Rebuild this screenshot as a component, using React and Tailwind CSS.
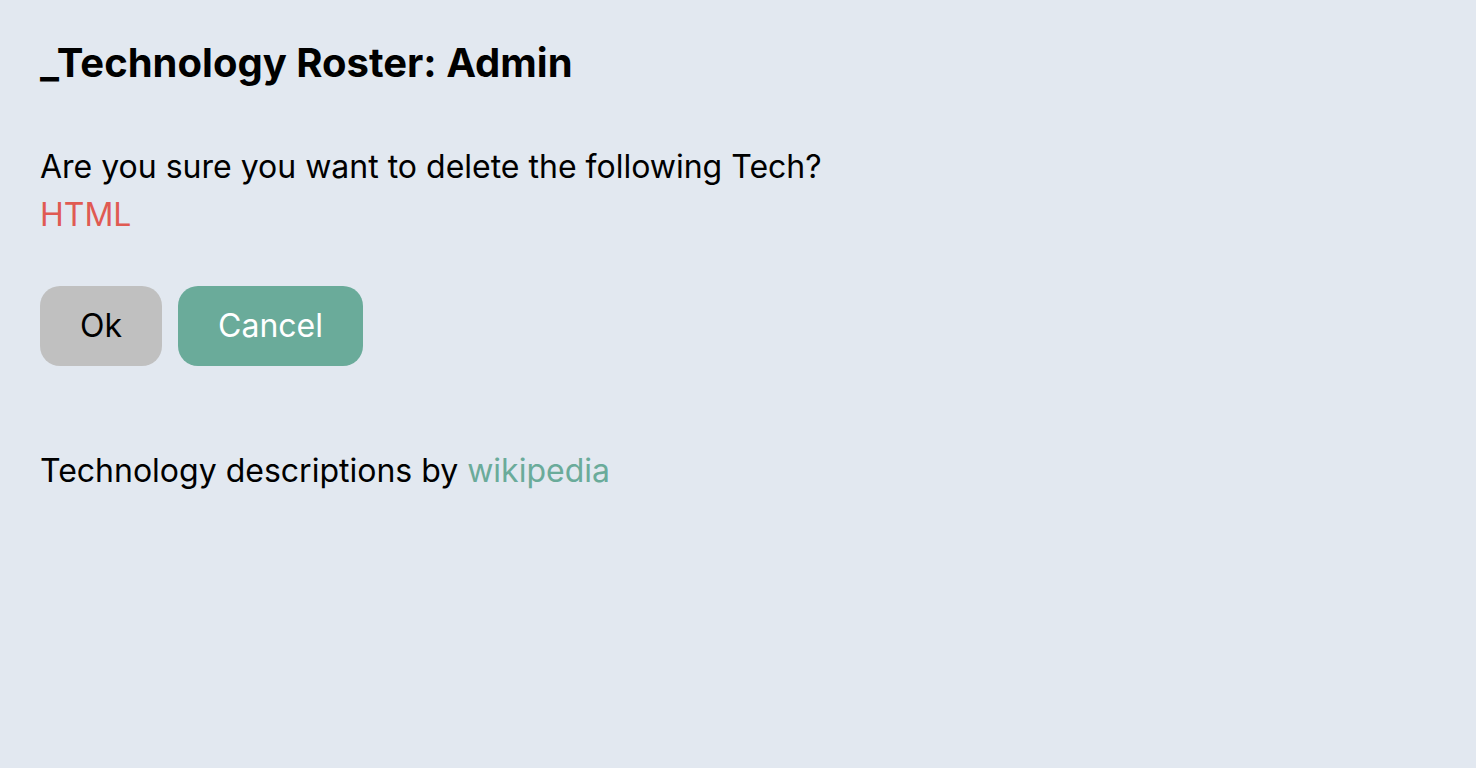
export default function App() {
  return (
    <div className="min-h-screen bg-[#e2e8f0] px-10 pt-[38px] text-black" style={{ fontFamily: 'Inter, "Noto Sans", sans-serif' }}>
      <h1 className="text-[40px] leading-[50px] font-bold">_Technology Roster: Admin</h1>

      <div className="mt-[55px] text-[32px] leading-[48px]">
        <p>Are you sure you want to delete the following Tech?</p>
        <p className="text-[#e05a52]">HTML</p>
      </div>

      <div className="mt-[47px] flex gap-4">
        <button className="h-[80px] rounded-[20px] bg-[#c0c0c0] px-10 text-[32px] text-black">Ok</button>
        <button className="h-[80px] rounded-[20px] bg-[#6aab9a] px-10 text-[32px] text-white">Cancel</button>
      </div>

      <p className="mt-[81px] text-[32px] leading-[48px]">
        Technology descriptions by <a className="text-[#6aab9a]">wikipedia</a>
      </p>
    </div>
  );
}
